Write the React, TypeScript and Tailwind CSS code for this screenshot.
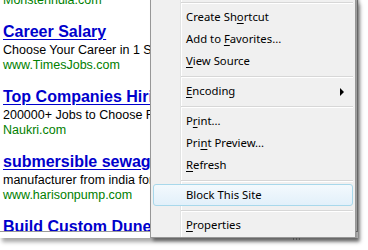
import React from 'react';

type Ad = { title?: string; desc?: string; url: string };

const ads: Ad[] = [
  { url: 'Monsterindia.com' },
  { title: 'Career Salary', desc: 'Choose Your Career in 1 Step with TimesJobs', url: 'www.TimesJobs.com' },
  { title: 'Top Companies Hiring', desc: '200000+ Jobs to Choose From', url: 'Naukri.com' },
  { title: 'submersible sewage pump', desc: 'manufacturer from india for export', url: 'www.harisonpump.com' },
  { title: 'Build Custom Dune Buggy', desc: '', url: '' },
];

function AdBlock({ ad }: { ad: Ad }) {
  return (
    <div className="flex flex-col whitespace-nowrap">
      {ad.title && (
        <a className="mt-[14px] text-[16px] leading-[19px] font-bold text-[#0000cc] underline underline-offset-[2px]">
          {ad.title}
        </a>
      )}
      {ad.desc && <div className="text-[12.5px] leading-[15px] text-black mt-[2px]">{ad.desc}</div>}
      {ad.url && <div className="text-[12.5px] leading-[15px] text-[#008000]">{ad.url}</div>}
    </div>
  );
}

// label with access key underlined
function Label({ text, k }: { text: string; k?: number }) {
  if (k === undefined) return <span>{text}</span>;
  return (
    <span>
      {text.slice(0, k)}
      <span className="underline underline-offset-[2px]">{text[k]}</span>
      {text.slice(k + 1)}
    </span>
  );
}

function Item({ text, k, hot, sub }: { text: string; k?: number; hot?: boolean; sub?: boolean }) {
  return (
    <div
      className={
        'relative h-[22px] flex items-center pl-[32px] pr-[10px] rounded-[3px] border ' +
        (hot
          ? 'border-[#a8d8eb] bg-gradient-to-b from-[#f3f9fd] to-[#e2f0fa] z-10'
          : 'border-transparent')
      }
    >
      <Label text={text} k={k} />
      {sub && (
        <svg className="absolute right-[7px] top-[7px]" width="5" height="8" viewBox="0 0 5 8">
          <path d="M0 0 L4 4 L0 8 Z" fill="#000" />
        </svg>
      )}
    </div>
  );
}

function Sep() {
  return (
    <div className="h-[8px] pl-[28px] flex flex-col justify-start pt-[4px]">
      <div className="h-px bg-[#d7d7d7]" />
      <div className="h-px bg-white" />
    </div>
  );
}

export default function App() {
  return (
    <div className="relative w-[368px] h-[250px] bg-white overflow-hidden">
      <div className="w-[358px] h-[238px] bg-white shadow-[2px_4px_4px_rgba(0,0,0,0.35)]">
        <div className="h-[232px] border-b border-r border-[#9a9a9a] overflow-hidden pl-[3px] font-['Liberation_Sans',Arial,sans-serif]">
          <div className="mt-[-7px]">
            {ads.map((ad, i) => (
              <AdBlock key={i} ad={ad} />
            ))}
          </div>
        </div>
      </div>

      <div className="absolute left-[293px] top-[238px] flex gap-[2px]">
        <div className="w-[1px] h-[2px] bg-[#7a7a7a]" />
        <div className="w-[1px] h-[2px] bg-[#7a7a7a]" />
        <div className="w-[1px] h-[2px] bg-[#7a7a7a]" />
      </div>

      <div className="absolute left-[150px] top-[-5px] w-[206px] h-[243px] bg-[#f0f0f0] border border-[#979797] p-[2px] shadow-[3px_3px_3px_rgba(0,0,0,0.4)] text-[11.3px] text-black font-['Segoe_UI','Noto_Sans',sans-serif]">
        <div className="absolute left-[29px] top-0 bottom-0 w-px bg-[#e2e3e3]" />
        <div className="absolute left-[30px] top-0 bottom-0 w-px bg-white" />
        <div className="relative flex flex-col">
          <Sep />
          <Item text="Create Shortcut" k={9} />
          <Item text="Add to Favorites..." k={7} />
          <Item text="View Source" k={0} />
          <Sep />
          <Item text="Encoding" k={0} sub />
          <Sep />
          <Item text="Print..." k={1} />
          <Item text="Print Preview..." k={3} />
          <Item text="Refresh" k={0} />
          <Sep />
          <Item text="Block This Site" hot />
          <Sep />
          <Item text="Properties" k={0} />
        </div>
      </div>
    </div>
  );
}
